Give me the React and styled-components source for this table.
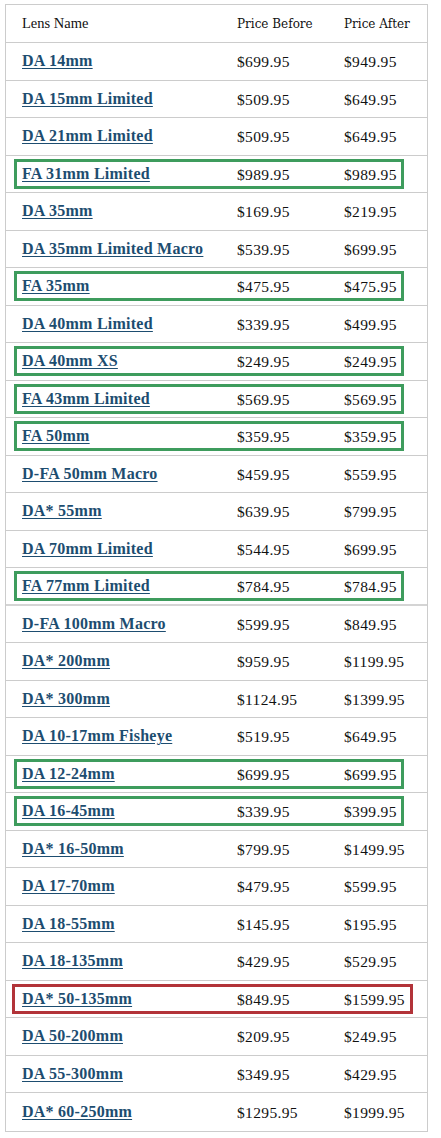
import React from "react";
import styled, { createGlobalStyle } from "styled-components";

const Global = createGlobalStyle`
  html, body { margin: 0; padding: 0; background: #ffffff; }
  body { font-family: "Liberation Serif", "DejaVu Serif", serif; }
`;

const Page = styled.div`
  padding: 4px 0 0 5px;
  width: 441px;
  box-sizing: border-box;
`;

const Table = styled.div`
  width: 423px;
  box-sizing: border-box;
  border: 1px solid #cccccc;
  display: flex;
  flex-direction: column;
`;

const Row = styled.div`
  height: ${(p) => (p.$header ? "38px" : "37.5px")};
  box-sizing: border-box;
  border-bottom: ${(p) => (p.$last ? "none" : p.$thick ? "2px solid #d4d4d4" : "1px solid #cccccc")};
  padding: ${(p) => (p.$header ? "0" : "3px")} ${(p) => (p.$mark === "red" ? "14px" : "23px")}
    ${(p) => (p.$header ? "0" : "3px")} ${(p) => (p.$mark === "red" ? "6px" : "8px")};
  display: flex;
  align-items: center;
`;

const Inner = styled.div`
  flex: 1;
  height: ${(p) => (p.$header ? "100%" : "30px")};
  box-sizing: border-box;
  border: 3px solid ${(p) => (p.$mark === "green" ? "#3e9c5d" : p.$mark === "red" ? "#b23339" : "transparent")};
  padding-left: ${(p) => (p.$mark === "red" ? "7px" : "5px")};
  display: grid;
  grid-template-columns: 215px 107px 1fr;
  align-items: center;
`;

const HeadCell = styled.div`
  color: #111;
  font-family: ${(p) => (p.$first ? '"Liberation Serif"' : '"DejaVu Serif"')}, serif;
  font-size: ${(p) => (p.$first ? "14.5px" : "12px")};
  white-space: nowrap;
`;

const NameLink = styled.a`
  font-family: "Liberation Serif", serif;
  font-weight: bold;
  font-size: 16px;
  color: #1d4d70;
  text-decoration: underline;
  text-underline-offset: 2px;
  white-space: nowrap;
  letter-spacing: 0.25px;
`;

const Price = styled.div`
  font-family: "Liberation Serif", serif;
  font-size: 15.5px;
  letter-spacing: 0.35px;
  color: #111;
  white-space: nowrap;
  padding-top: 2px;
`;

const rows = [
  ["DA 14mm", "$699.95", "$949.95"],
  ["DA 15mm Limited", "$509.95", "$649.95"],
  ["DA 21mm Limited", "$509.95", "$649.95"],
  ["FA 31mm Limited", "$989.95", "$989.95", "green"],
  ["DA 35mm", "$169.95", "$219.95"],
  ["DA 35mm Limited Macro", "$539.95", "$699.95"],
  ["FA 35mm", "$475.95", "$475.95", "green"],
  ["DA 40mm Limited", "$339.95", "$499.95"],
  ["DA 40mm XS", "$249.95", "$249.95", "green"],
  ["FA 43mm Limited", "$569.95", "$569.95", "green"],
  ["FA 50mm", "$359.95", "$359.95", "green"],
  ["D-FA 50mm Macro", "$459.95", "$559.95"],
  ["DA* 55mm", "$639.95", "$799.95"],
  ["DA 70mm Limited", "$544.95", "$699.95"],
  ["FA 77mm Limited", "$784.95", "$784.95", "green", true],
  ["D-FA 100mm Macro", "$599.95", "$849.95"],
  ["DA* 200mm", "$959.95", "$1199.95"],
  ["DA* 300mm", "$1124.95", "$1399.95"],
  ["DA 10-17mm Fisheye", "$519.95", "$649.95"],
  ["DA 12-24mm", "$699.95", "$699.95", "green"],
  ["DA 16-45mm", "$339.95", "$399.95", "green"],
  ["DA* 16-50mm", "$799.95", "$1499.95"],
  ["DA 17-70mm", "$479.95", "$599.95"],
  ["DA 18-55mm", "$145.95", "$195.95"],
  ["DA 18-135mm", "$429.95", "$529.95"],
  ["DA* 50-135mm", "$849.95", "$1599.95", "red"],
  ["DA 50-200mm", "$209.95", "$249.95"],
  ["DA 55-300mm", "$349.95", "$429.95"],
  ["DA* 60-250mm", "$1295.95", "$1999.95"],
];

export default function App() {
  return (
    <Page>
      <Global />
      <Table>
        <Row $header>
          <Inner $header>
            <HeadCell $first>Lens Name</HeadCell>
            <HeadCell>Price Before</HeadCell>
            <HeadCell>Price After</HeadCell>
          </Inner>
        </Row>
        {rows.map(([name, before, after, mark, thick], i) => (
          <Row key={name} $mark={mark} $thick={thick} $last={i === rows.length - 1}>
            <Inner $mark={mark}>
              <div>
                <NameLink href="#">{name}</NameLink>
              </div>
              <Price>{before}</Price>
              <Price>{after}</Price>
            </Inner>
          </Row>
        ))}
      </Table>
    </Page>
  );
}
